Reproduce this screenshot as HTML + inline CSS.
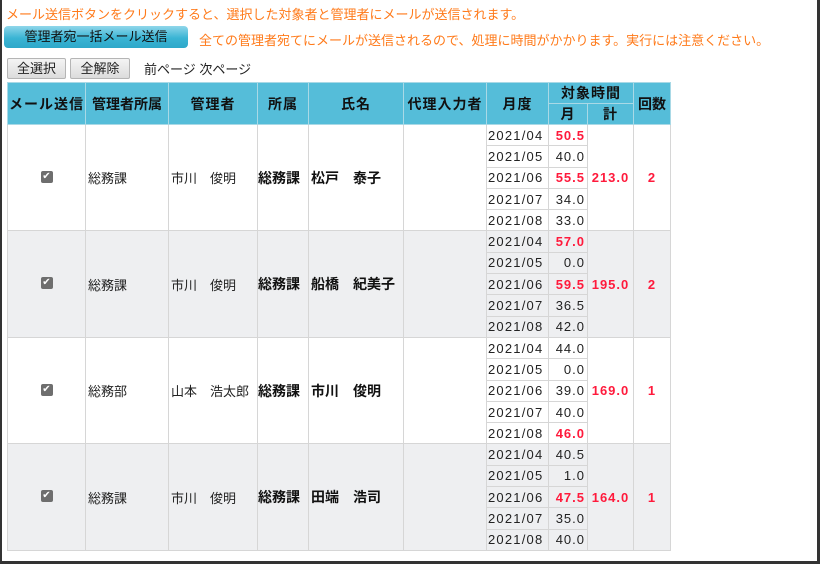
<!DOCTYPE html>
<html><head><meta charset="utf-8"><style>
html,body{margin:0;padding:0;}
body{width:820px;height:564px;position:relative;background:#fff;font-family:"Liberation Sans","Noto Sans CJK JP",sans-serif;font-size:13px;color:#222;overflow:hidden;}
.frame{position:absolute;left:0;top:0;width:815px;height:561px;border-left:2px solid #333;border-right:3px solid #333;border-bottom:3px solid #333;}
.msg{position:absolute;left:6px;top:4px;color:#ff7a1a;font-size:13px;white-space:nowrap;}
.bigbtn{position:absolute;left:4px;top:26px;width:184px;height:22px;border-radius:4px;background:linear-gradient(#8fd6ea,#3ab4d4 55%,#2ea8c9);color:#111;font-size:13px;line-height:22px;text-align:center;}
.msg2{position:absolute;left:199px;top:30px;color:#ff7a1a;font-size:13px;white-space:nowrap;}
.b{position:absolute;top:58px;height:19px;border:1px solid #b5b5b5;border-radius:2px;background:linear-gradient(#f4f4f4,#dcdcdc);line-height:19px;text-align:center;font-size:13px;}
.nav{position:absolute;left:144px;top:59px;font-size:13px;}
table{position:absolute;left:7px;top:82px;border-collapse:collapse;table-layout:fixed;}
td,th{border:1px solid #d6d6d6;padding:0;font-size:13px;white-space:nowrap;overflow:hidden;}
th{background:#55bdd9;border-color:#a9d9e6;font-weight:bold;color:#111;height:20px;font-size:14px;letter-spacing:1px;}
tr.r td{height:20.3px;}
.g td{background:#eeeff1;}
.w td{background:#fff;}
.c{text-align:center;}
.bd{font-weight:bold;color:#111;font-size:14px;}
.d{padding-left:2px;}
.n{text-align:right;padding-right:2px;letter-spacing:1px;}
.dt{padding-left:1px;letter-spacing:1.2px;}
.red{color:#ff1a3c;font-weight:bold;letter-spacing:1px;}
.chk{display:inline-block;width:12px;height:12px;background:#6e6e6e;border-radius:2px;color:#fff;font-size:10px;line-height:12px;text-align:center;position:relative;top:-3px;}
</style></head><body>
<div class="frame"></div>
<div class="msg">メール送信ボタンをクリックすると、選択した対象者と管理者にメールが送信されます。</div>
<div class="bigbtn">管理者宛一括メール送信</div>
<div class="msg2">全ての管理者宛てにメールが送信されるので、処理に時間がかかります。実行には注意ください。</div>
<div class="b" style="left:7px;width:57px;">全選択</div>
<div class="b" style="left:70px;width:58px;">全解除</div>
<div class="nav">前ページ 次ページ</div>
<table>
<colgroup><col style="width:78px"><col style="width:83px"><col style="width:89px"><col style="width:51px"><col style="width:95px"><col style="width:83px"><col style="width:62px"><col style="width:39px"><col style="width:46px"><col style="width:37px"></colgroup>
<tr><th rowspan="2">メール送信</th><th rowspan="2" style="letter-spacing:0">管理者所属</th><th rowspan="2">管理者</th><th rowspan="2">所属</th><th rowspan="2">氏名</th><th rowspan="2">代理入力者</th><th rowspan="2">月度</th><th colspan="2">対象時間</th><th rowspan="2" style="letter-spacing:0">回数</th></tr>
<tr><th>月</th><th>計</th></tr>

<tr class="r w"><td rowspan="5" class="c"><span class="chk">✔</span></td><td rowspan="5" class="d">総務課</td><td rowspan="5" class="d">市川　俊明</td><td rowspan="5" class="bd">総務課</td><td rowspan="5" class="bd d">松戸　泰子</td><td rowspan="5"></td><td class="dt">2021/04</td><td class="n red">50.5</td><td rowspan="5" class="c red">213.0</td><td rowspan="5" class="c red">2</td></tr>
<tr class="r w"><td class="dt">2021/05</td><td class="n">40.0</td></tr>
<tr class="r w"><td class="dt">2021/06</td><td class="n red">55.5</td></tr>
<tr class="r w"><td class="dt">2021/07</td><td class="n">34.0</td></tr>
<tr class="r w"><td class="dt">2021/08</td><td class="n">33.0</td></tr>

<tr class="r g"><td rowspan="5" class="c"><span class="chk">✔</span></td><td rowspan="5" class="d">総務課</td><td rowspan="5" class="d">市川　俊明</td><td rowspan="5" class="bd">総務課</td><td rowspan="5" class="bd d">船橋　紀美子</td><td rowspan="5"></td><td class="dt">2021/04</td><td class="n red">57.0</td><td rowspan="5" class="c red">195.0</td><td rowspan="5" class="c red">2</td></tr>
<tr class="r g"><td class="dt">2021/05</td><td class="n">0.0</td></tr>
<tr class="r g"><td class="dt">2021/06</td><td class="n red">59.5</td></tr>
<tr class="r g"><td class="dt">2021/07</td><td class="n">36.5</td></tr>
<tr class="r g"><td class="dt">2021/08</td><td class="n">42.0</td></tr>

<tr class="r w"><td rowspan="5" class="c"><span class="chk">✔</span></td><td rowspan="5" class="d">総務部</td><td rowspan="5" class="d">山本　浩太郎</td><td rowspan="5" class="bd">総務課</td><td rowspan="5" class="bd d">市川　俊明</td><td rowspan="5"></td><td class="dt">2021/04</td><td class="n">44.0</td><td rowspan="5" class="c red">169.0</td><td rowspan="5" class="c red">1</td></tr>
<tr class="r w"><td class="dt">2021/05</td><td class="n">0.0</td></tr>
<tr class="r w"><td class="dt">2021/06</td><td class="n">39.0</td></tr>
<tr class="r w"><td class="dt">2021/07</td><td class="n">40.0</td></tr>
<tr class="r w"><td class="dt">2021/08</td><td class="n red">46.0</td></tr>

<tr class="r g"><td rowspan="5" class="c"><span class="chk">✔</span></td><td rowspan="5" class="d">総務課</td><td rowspan="5" class="d">市川　俊明</td><td rowspan="5" class="bd">総務課</td><td rowspan="5" class="bd d">田端　浩司</td><td rowspan="5"></td><td class="dt">2021/04</td><td class="n">40.5</td><td rowspan="5" class="c red">164.0</td><td rowspan="5" class="c red">1</td></tr>
<tr class="r g"><td class="dt">2021/05</td><td class="n">1.0</td></tr>
<tr class="r g"><td class="dt">2021/06</td><td class="n red">47.5</td></tr>
<tr class="r g"><td class="dt">2021/07</td><td class="n">35.0</td></tr>
<tr class="r g"><td class="dt">2021/08</td><td class="n">40.0</td></tr>
</table>
</body></html>
